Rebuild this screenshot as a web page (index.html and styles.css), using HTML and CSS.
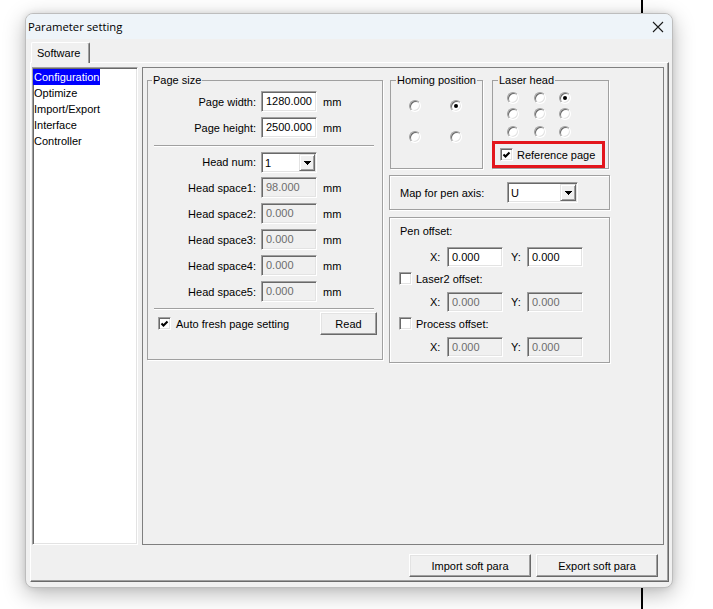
FILE: index.html
```html
<!DOCTYPE html>
<html lang="en">
<head>
<meta charset="utf-8">
<title>Parameter setting</title>
<link rel="stylesheet" href="styles.css">
</head>
<body>
<div class="window">
  <div class="titlebar">
    <span class="title">Parameter setting</span>
    <svg class="close" width="12" height="12" viewBox="0 0 12 12"><path d="M1 1L11 11M11 1L1 11" stroke="#1b1b1b" stroke-width="1.1" fill="none"/></svg>
  </div>
  <div class="client">
    <div class="tabs"><div class="tab">Software</div></div>
    <div class="pane">
      <div class="main">
        <ul class="tree">
          <li><span class="sel">Configuration</span></li>
          <li>Optimize</li>
          <li>Import/Export</li>
          <li>Interface</li>
          <li>Controller</li>
        </ul>
        <div class="frame">
          <fieldset class="group pagesize">
            <legend>Page size</legend>
            <div class="rows rows-a">
              <span class="lbl">Page width:</span><span class="edit">1280.000</span><span class="unit">mm</span>
              <span class="lbl">Page height:</span><span class="edit">2500.000</span><span class="unit">mm</span>
            </div>
            <div class="sep"></div>
            <div class="rows rows-b">
              <span class="lbl">Head num:</span><span class="combo"><span class="val">1</span><span class="drop"><svg width="7" height="4" viewBox="0 0 7 4"><polygon points="0,0 7,0 3.5,4" fill="#000"/></svg></span></span><span></span>
              <span class="lbl">Head space1:</span><span class="edit off">98.000</span><span class="unit">mm</span>
              <span class="lbl">Head space2:</span><span class="edit off">0.000</span><span class="unit">mm</span>
              <span class="lbl">Head space3:</span><span class="edit off">0.000</span><span class="unit">mm</span>
              <span class="lbl">Head space4:</span><span class="edit off">0.000</span><span class="unit">mm</span>
              <span class="lbl">Head space5:</span><span class="edit off">0.000</span><span class="unit">mm</span>
            </div>
            <div class="sep sep2"></div>
            <div class="checkrow">
              <span class="ck"><span class="check"><svg width="11" height="11" viewBox="1 1 11 11"><polyline points="3.5,6.5 5.5,8.5 9.5,4.5" fill="none" stroke="#000" stroke-width="2.1"/></svg></span>Auto fresh page setting</span>
              <button class="btn read">Read</button>
            </div>
          </fieldset>

          <div class="col2">
            <div class="toprow">
              <fieldset class="group homing">
                <legend>Homing position</legend>
                <div class="radios">
                  <span class="radio"></span><span class="radio on"></span>
                  <span class="radio"></span><span class="radio"></span>
                </div>
              </fieldset>
              <fieldset class="group laser">
                <legend>Laser head</legend>
                <div class="radios">
                  <span class="radio"></span><span class="radio"></span><span class="radio on"></span>
                  <span class="radio"></span><span class="radio"></span><span class="radio"></span>
                  <span class="radio"></span><span class="radio"></span><span class="radio"></span>
                </div>
                <div class="refbox">
                  <span class="check"><svg width="11" height="11" viewBox="1 1 11 11"><polyline points="3.5,6.5 5.5,8.5 9.5,4.5" fill="none" stroke="#000" stroke-width="2.1"/></svg></span>
                  <span>Reference page</span>
                </div>
              </fieldset>
            </div>

            <div class="etched mapframe">
              <span class="maplbl">Map for pen axis:</span>
              <span class="combo wide"><span class="val">U</span><span class="drop"><svg width="7" height="4" viewBox="0 0 7 4"><polygon points="0,0 7,0 3.5,4" fill="#000"/></svg></span></span>
            </div>

            <div class="etched penframe">
              <div class="penlbl">Pen offset:</div>
              <div class="xy">
                <span class="xl">X:</span><span class="edit small">0.000</span>
                <span class="yl">Y:</span><span class="edit small">0.000</span>
              </div>
              <div class="ck ckrow"><span class="check"></span>Laser2 offset:</div>
              <div class="xy xy2">
                <span class="xl">X:</span><span class="edit small off">0.000</span>
                <span class="yl">Y:</span><span class="edit small off">0.000</span>
              </div>
              <div class="ck ckrow"><span class="check"></span>Process offset:</div>
              <div class="xy xy2">
                <span class="xl">X:</span><span class="edit small off">0.000</span>
                <span class="yl">Y:</span><span class="edit small off">0.000</span>
              </div>
            </div>
          </div>
        </div>
      </div>
      <div class="footer">
        <button class="btn big">Import soft para</button>
        <button class="btn big">Export soft para</button>
      </div>
    </div>
  </div>
</div>
</body>
</html>
```

FILE: styles.css
```css
* { box-sizing: border-box; }
html, body { margin: 0; padding: 0; }
body {
  width: 713px;
  height: 609px;
  overflow: hidden;
  padding: 13px 0 0 25px;
  background-color: #fff;
  background-image: linear-gradient(to right, transparent 641px, #000 641px, #000 643px, transparent 643px);
  font-family: "Liberation Sans", Arial, sans-serif;
  font-size: 11px;
  color: #000;
}

.window {
  width: 648px;
  height: 575px;
  border: 1px solid #bdbdbd;
  border-radius: 8px;
  background: #f0f0f0;
  box-shadow: 0 6px 22px rgba(0,0,0,.28), 0 0 6px rgba(0,0,0,.10);
  overflow: hidden;
  display: flex;
  flex-direction: column;
}

.titlebar {
  flex: none;
  height: 25px;
  background: #eef4f9;
  display: flex;
  align-items: center;
  justify-content: space-between;
  padding: 0 8px 0 2px;
  font-family: "Open Sans", "Liberation Sans", sans-serif;
  font-size: 11.3px;
  color: #000;
}
.close { display: block; }

.client {
  flex: 1;
  display: flex;
  flex-direction: column;
  padding: 3px 3px 5px 4px;
  min-height: 0;
}

.tabs {
  flex: none;
  height: 20px;
  display: flex;
  align-items: flex-start;
  padding-left: 1px;
  position: relative;
  z-index: 1;
}
.tab {
  width: 59px;
  height: 21px;
  padding: 3px 0 0 5px;
  line-height: 14px;
  background: #f0f0f0;
  border-top: 1px solid #fff;
  border-left: 1px solid #fff;
  border-right: 1px solid #696969;
  box-shadow: inset -1px 0 #a0a0a0;
  border-radius: 2px 2px 0 0;
}

.pane {
  flex: 1;
  min-height: 0;
  border: 1px solid;
  border-color: #fff #696969 #696969 #fff;
  box-shadow: inset -1px -1px #a0a0a0;
  padding: 4px 4px 4px 1px;
  display: flex;
  flex-direction: column;
}

.main {
  flex: none;
  height: 478px;
  display: flex;
  gap: 4px;
}

.footer {
  flex: none;
  display: flex;
  justify-content: flex-end;
  gap: 5px;
  margin-top: 9px;
  padding-right: 6px;
}

.tree {
  width: 106px;
  margin: 0;
  padding: 1px 0 0 0;
  list-style: none;
  background: #fff;
  border: 1px solid;
  border-color: #a0a0a0 #fff #fff #a0a0a0;
  box-shadow: inset 1px 1px #696969, inset -1px -1px #e3e3e3;
}
.tree li {
  height: 16px;
  line-height: 16px;
  padding-left: 1px;
  white-space: nowrap;
}
.tree li:first-child { padding-left: 0; }
.tree .sel {
  display: inline-block;
  background: #0000ff;
  color: #fff;
  padding: 0 1px;
  height: 16px;
}

.frame {
  flex: 1;
  border: 1px solid #7f7f7f;
  padding: 6px 0 0 4px;
  display: flex;
  align-items: flex-start;
  gap: 6px;
}

/* group boxes */
.group {
  margin: 0;
  padding: 0;
  min-width: 0;
  border: 1px solid #a0a0a0;
  box-shadow: 1px 1px 0 #fff;
}
.group legend {
  padding: 0 1px;
  margin-left: 4px;
  line-height: 13px;
}
.etched {
  border: 1px solid #a0a0a0;
  box-shadow: inset 1px 1px #fff, 1px 1px 0 #fff;
}

.pagesize { width: 236px; }

.rows {
  display: grid;
  grid-template-columns: 108px 56px auto;
  column-gap: 5px;
  row-gap: 5px;
  grid-auto-rows: 21px;
  align-items: center;
}
.rows-a { padding-top: 4px; }
.rows-b {
  padding-top: 5px;
  grid-template-rows: 20px;
  align-items: start;
}
.rows-b .lbl, .rows-b .unit { align-self: center; }
.lbl { text-align: right; white-space: nowrap; }
.unit { margin-left: 1px; }

.edit {
  display: flex;
  align-items: center;
  width: 56px;
  height: 21px;
  padding: 0 0 1px 4px;
  background: #fff;
  border: 1px solid;
  border-color: #a0a0a0 #fff #fff #a0a0a0;
  box-shadow: inset 1px 1px #696969, inset -1px -1px #e3e3e3;
  white-space: nowrap;
}
.edit.off { background: #f0f0f0; color: #6d6d6d; }
.edit.small { height: 20px; }

.combo {
  display: flex;
  align-items: stretch;
  width: 56px;
  height: 21px;
  padding: 1px;
  background: #fff;
  border: 1px solid;
  border-color: #a0a0a0 #fff #fff #a0a0a0;
  box-shadow: inset 1px 1px #696969, inset -1px -1px #e3e3e3;
}
.combo.wide { width: 71px; }
.combo .val {
  flex: 1;
  display: flex;
  align-items: center;
  padding-left: 2px;
}
.combo .drop {
  width: 16px;
  display: flex;
  align-items: center;
  justify-content: center;
  background: #f0f0f0;
  border: 1px solid;
  border-color: #e3e3e3 #696969 #696969 #e3e3e3;
  box-shadow: inset 1px 1px #fff, inset -1px -1px #a0a0a0;
}
.combo .drop svg { display: block; shape-rendering: crispEdges; }

.sep {
  height: 2px;
  border-top: 1px solid #a0a0a0;
  border-bottom: 1px solid #fff;
  margin: 7px 8px 0 6px;
}
.sep2 { margin-top: 6px; }

.checkrow {
  display: flex;
  align-items: center;
  justify-content: space-between;
  margin-top: 2px;
  padding: 0 5px 24px 10px;
}

.ck {
  display: flex;
  align-items: center;
  gap: 5px;
  white-space: nowrap;
}
.check {
  flex: none;
  display: block;
  width: 13px;
  height: 13px;
  background: #fff;
  border: 1px solid;
  border-color: #a0a0a0 #fff #fff #a0a0a0;
  box-shadow: inset 1px 1px #696969, inset -1px -1px #e3e3e3;
}
.check svg { display: block; }

.btn {
  font: inherit;
  color: #000;
  height: 23px;
  padding: 0;
  background: #f0f0f0;
  border: 1px solid;
  border-color: #fff #696969 #696969 #fff;
  box-shadow: inset -1px -1px #a0a0a0, inset 1px 1px #e3e3e3;
}
.read { width: 57px; }
.big { width: 122px; }

/* right column */
.col2 {
  width: 221px;
  display: flex;
  flex-direction: column;
}
.toprow {
  display: flex;
  align-items: stretch;
  gap: 9px;
  padding-left: 1px;
}
.homing { width: 93px; }
.homing legend { margin-left: 5px; }
.laser { width: 117px; }
.laser legend { margin-left: 5px; }

.radios { display: grid; }
.homing .radios {
  grid-template-columns: 12px 12px;
  grid-auto-rows: 12px;
  column-gap: 29px;
  row-gap: 19px;
  padding: 13px 0 0 18px;
}
.laser .radios {
  grid-template-columns: 27px 25px 12px;
  grid-template-rows: 16px 18px 12px;
  padding: 5px 0 0 14px;
}
.radio {
  display: block;
  width: 12px;
  height: 12px;
  border-radius: 50%;
  background: #fff;
  border: 1px solid;
  border-color: #a0a0a0 #fff #fff #a0a0a0;
  box-shadow: inset 1px 1px #696969, inset -1px -1px #e3e3e3;
  position: relative;
}
.radio.on::after {
  content: "";
  position: absolute;
  left: 3px;
  top: 3px;
  width: 4px;
  height: 4px;
  border-radius: 50%;
  background: #000;
}

.refbox {
  margin: 3px 0 0 -1px;
  width: 113px;
  height: 27px;
  border: 3px solid #e3161c;
  display: flex;
  align-items: center;
  gap: 4px;
  padding-left: 5px;
  position: relative;
  white-space: nowrap;
}

.mapframe {
  margin-top: 6px;
  height: 35px;
  display: flex;
  align-items: center;
  padding-left: 10px;
}
.maplbl { width: 107px; white-space: nowrap; }

.penframe {
  margin-top: 7px;
  padding: 7px 0 5px 9px;
}
.penlbl { line-height: 13px; margin-left: 1px; }
.xy {
  display: flex;
  align-items: center;
  margin-top: 9px;
  padding-left: 31px;
}
.xy2 { margin-top: 7px; }
.xl { width: 17px; }
.yl { width: 16px; margin-left: 8px; }
.ckrow { margin-top: 5px; gap: 4px; height: 13px; }
```
